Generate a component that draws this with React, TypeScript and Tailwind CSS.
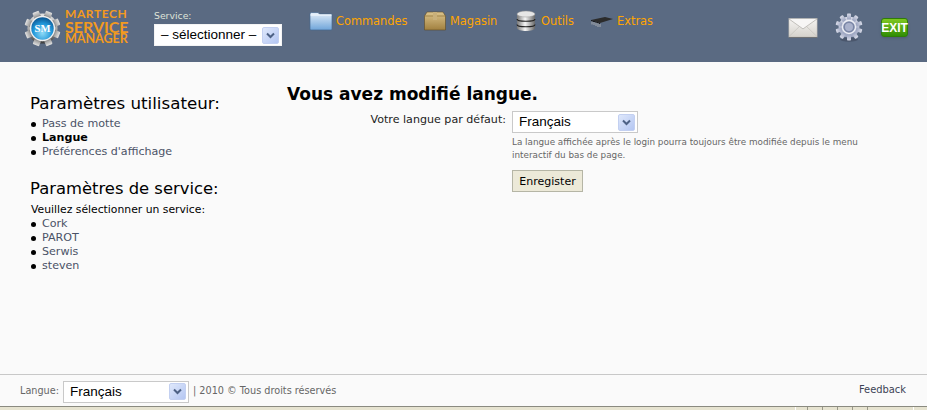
import React from "react";

const Arrow = () => (
  <span className="flex h-[17px] w-[17px] items-center justify-center rounded-[2px] bg-gradient-to-br from-[#dfe8fb] to-[#b4c6f2] border border-[#c3d0f1]">
    <svg width="9" height="7" viewBox="0 0 9 7">
      <path d="M1 1.5 L4.5 5 L8 1.5" fill="none" stroke="#4d6185" strokeWidth="2" />
    </svg>
  </span>
);

const Select = ({ label, w, border = "border-[#c9c9c9]" }: { label: string; w: string; border?: string }) => (
  <div className={`flex h-[22px] items-center justify-between border bg-white pl-[6px] pr-[2px] font-['Liberation_Sans',sans-serif] text-[13.5px] leading-none text-black ${w} ${border}`}>
    <span>{label}</span>
    <Arrow />
  </div>
);

const Logo = () => (
  <svg width="37" height="37" viewBox="0 0 38 38">
    <defs>
      <linearGradient id="g1" x1="0" y1="0" x2="0" y2="1">
        <stop offset="0" stopColor="#e2e2e2" />
        <stop offset="0.55" stopColor="#a5a5a5" />
        <stop offset="1" stopColor="#3a3a3a" />
      </linearGradient>
      <radialGradient id="g2" cx="0.5" cy="0.7" r="0.65">
        <stop offset="0" stopColor="#8fdcf8" />
        <stop offset="0.65" stopColor="#1f95d8" />
        <stop offset="1" stopColor="#0e5f9c" />
      </radialGradient>
    </defs>
    <g fill="url(#g1)">
      <circle cx="19" cy="19" r="15.5" />
      {[0, 45, 90, 135, 180, 225, 270, 315].map((a) => (
        <rect key={a} x="15.5" y="0.5" width="7" height="8" rx="1" transform={`rotate(${a + 22} 19 19)`} />
      ))}
    </g>
    <circle cx="19" cy="19" r="13" fill="#f0f0f0" />
    <circle cx="19" cy="19" r="11.5" fill="url(#g2)" />
    <text x="19" y="23" textAnchor="middle" fontFamily="'Liberation Serif', serif" fontSize="11" fontWeight="700" fill="#fff">SM</text>
  </svg>
);

const Folder = () => (
  <svg width="24" height="20" viewBox="0 0 24 20">
    <defs>
      <linearGradient id="f1" x1="0" y1="0" x2="0" y2="1">
        <stop offset="0" stopColor="#e4eef8" />
        <stop offset="1" stopColor="#6fa5da" />
      </linearGradient>
    </defs>
    <path d="M1 3 Q1 1.5 2.5 1.5 H9 L10.5 3 H22 Q23 3 23 4 V18 Q23 19 22 19 H2 Q1 19 1 18 Z" fill="url(#f1)" stroke="#46688f" strokeWidth="0.7" />
    <path d="M1.5 4 H22.5" stroke="#f7fbff" />
  </svg>
);

const Box = () => (
  <svg width="22" height="20" viewBox="0 0 22 20">
    <defs>
      <linearGradient id="b1" x1="0" y1="0" x2="0" y2="1">
        <stop offset="0" stopColor="#dcc48c" />
        <stop offset="1" stopColor="#a1803f" />
      </linearGradient>
    </defs>
    <path d="M3 1 H19 L21.5 5 V19 H0.5 V5 Z" fill="url(#b1)" stroke="#5e4a26" strokeWidth="0.6" />
    <path d="M0.5 5 H21.5" stroke="#8d7038" strokeWidth="0.7" />
    <rect x="9" y="1" width="4" height="8" fill="#c9b07a" />
  </svg>
);

const Db = () => (
  <svg width="20" height="22" viewBox="0 0 20 22">
    <defs>
      <linearGradient id="d1" x1="0" y1="0" x2="1" y2="0">
        <stop offset="0" stopColor="#777" />
        <stop offset="0.45" stopColor="#f6f6f6" />
        <stop offset="1" stopColor="#666" />
      </linearGradient>
    </defs>
    <path d="M1 4 V18 C1 22 19 22 19 18 V4 Z" fill="url(#d1)" />
    <ellipse cx="10" cy="4" rx="9" ry="3" fill="#e6e6e6" stroke="#999" strokeWidth="0.5" />
    <path d="M1 9 C1 12 19 12 19 9 M1 14.5 C1 17.5 19 17.5 19 14.5" fill="none" stroke="#222" strokeWidth="1.2" />
  </svg>
);

const Chip = () => (
  <svg width="24" height="14" viewBox="0 0 24 14">
    <path d="M1 6 L15 3 L23 5 L10 9 Z" fill="#2b2b2b" />
    <path d="M1 6 L10 9 V10 L1 7 Z" fill="#111" />
    <path d="M2 7.5 V10.5 M4 8 V11 M6 8.5 V12 M8 9 V13 M10 10 V13" stroke="#bbb" strokeWidth="0.8" />
  </svg>
);

const Mail = () => (
  <svg width="30" height="20" viewBox="0 0 32 22">
    <defs>
      <linearGradient id="m1" x1="0" y1="0" x2="0" y2="1">
        <stop offset="0" stopColor="#f5f4f2" />
        <stop offset="1" stopColor="#d5d2cc" />
      </linearGradient>
    </defs>
    <rect x="0.5" y="0.5" width="31" height="20.5" fill="url(#m1)" stroke="#b5b2ac" strokeWidth="0.6" />
    <path d="M0.5 1 L16 12 L31.5 1" fill="#f7f6f5" stroke="#a5a29c" strokeWidth="0.7" />
    <path d="M0.5 20.5 L12 9.5 M31.5 20.5 L20 9.5" stroke="#c2bfb9" strokeWidth="0.7" />
    <path d="M0.5 21.5 H31.5" stroke="#6f6f6f" />
  </svg>
);

const Gear = () => (
  <svg width="28" height="29" viewBox="0 0 28 29">
    <defs>
      <linearGradient id="g3" x1="0" y1="0" x2="0" y2="1">
        <stop offset="0" stopColor="#d8dbe8" />
        <stop offset="1" stopColor="#9aa3bf" />
      </linearGradient>
    </defs>
    <ellipse cx="14" cy="26.5" rx="9" ry="2.2" fill="#3f4a5e" opacity="0.6" />
    <g fill="url(#g3)">
      <circle cx="14" cy="14" r="10.5" />
      {[0, 36, 72, 108, 144, 180, 216, 252, 288, 324].map((a) => (
        <rect key={a} x="12" y="0.5" width="4" height="6" rx="0.8" transform={`rotate(${a} 14 14)`} />
      ))}
    </g>
    <circle cx="14" cy="14" r="6.5" fill="#7a86a6" stroke="#eceef5" strokeWidth="1.4" />
    <circle cx="14" cy="14" r="4" fill="#aab2cc" />
  </svg>
);

const Nav = ({ icon, label, w, iw }: { icon: React.ReactNode; label: string; w: string; iw: string }) => (
  <div className={`flex items-center ${w}`}>
    <span className={`flex shrink-0 justify-start ${iw}`}>{icon}</span>
    <span className="mt-[2px] text-[11.4px] leading-none text-[#ffa500]">{label}</span>
  </div>
);

const Item = ({ children, bold }: { children: React.ReactNode; bold?: boolean }) => (
  <li className={`flex h-[14px] items-center text-[11.1px] leading-[14px] ${bold ? "font-bold text-black" : "text-[#4a5266]"}`}>
    <span className="mr-[6px] ml-[1px] inline-block h-[5px] w-[5px] rounded-full bg-black" />
    <span>{children}</span>
  </li>
);

export default function App() {
  return (
    <div className="flex h-[410px] w-[927px] flex-col overflow-hidden bg-[#fafafa] font-['DejaVu_Sans',sans-serif]">
      <header className="flex h-[62px] shrink-0 items-start bg-[#5a6a82]">
        <div className="ml-[24px] mt-[8px] flex w-[106px] shrink-0 items-center">
          <Logo />
          <div className="mb-[4px] ml-[4px] flex flex-col items-start font-['Lato',sans-serif] font-bold uppercase leading-none text-[#f39a1e]">
            <span className="text-[12px] tracking-[0.6px] leading-[12px]">Martech</span>
            <span className="text-[16px] leading-[13px]">Service</span>
            <span className="text-[12.5px] leading-[11px]">Manager</span>
          </div>
        </div>
        <div className="ml-[24px] mt-[10px] flex flex-col">
          <span className="text-[9.3px] leading-[12px] text-[#dfe3d8]">Service:</span>
          <div className="mt-[2px]">
            <Select label="– sélectionner –" w="w-[128px]" border="border-[#f4f4f4]" />
          </div>
        </div>
        <nav className="ml-[27px] mt-[10px] flex">
          <Nav icon={<Folder />} label="Commandes" w="w-[115px]" iw="w-[27px]" />
          <Nav icon={<Box />} label="Magasin" w="w-[92px]" iw="w-[26px]" />
          <Nav icon={<Db />} label="Outils" w="w-[74px]" iw="w-[25px]" />
          <Nav icon={<Chip />} label="Extras" w="w-[63px]" iw="w-[27px]" />
        </nav>
        <div className="ml-auto mr-[19px] mt-[13px] flex items-start">
          <div className="mt-[5px]"><Mail /></div>
          <div className="ml-[17px]"><Gear /></div>
          <div className="ml-[18px] mt-[5px] flex h-[19px] w-[27px] items-center justify-center rounded-[3px] border border-[#2f7d08] bg-gradient-to-b from-[#7fc81f] to-[#2f8e05] font-['Liberation_Sans',sans-serif] text-[12px] font-bold leading-none text-white shadow-sm">
            EXIT
          </div>
        </div>
      </header>

      <main className="flex flex-1 items-start">
        <aside className="ml-[30px] mt-[32px] w-[257px] shrink-0">
          <h2 className="text-[16.7px] font-normal leading-[19px] text-black">Paramètres utilisateur:</h2>
          <ul className="mt-[4px]">
            <Item>Pass de motte</Item>
            <Item bold>Langue</Item>
            <Item>Préférences d'affichage</Item>
          </ul>
          <h2 className="mt-[20px] text-[16.4px] font-normal leading-[19px] text-black">Paramètres de service:</h2>
          <p className="mt-[5px] ml-[1px] text-[10.8px] leading-[14px] text-black">Veuillez sélectionner un service:</p>
          <ul>
            <Item>Cork</Item>
            <Item>PAROT</Item>
            <Item>Serwis</Item>
            <Item>steven</Item>
          </ul>
        </aside>
        <section className="mt-[20px] flex-1">
          <h1 className="text-[17px] font-bold leading-[24px] text-black">Vous avez modifié langue.</h1>
          <div className="mt-[5px] flex">
            <div className="w-[225px] shrink-0 pr-[6px] pt-[2px] text-right text-[11.1px] leading-[14px] text-[#222]">Votre langue par défaut:</div>
            <div className="flex w-[355px] flex-col items-start">
              <Select label="Français" w="w-[126px]" />
              <p className="mt-[3px] text-[8.8px] leading-[13px] text-[#666]">
                La langue affichée après le login pourra toujours être modifiée depuis le menu interactif du bas de page.
              </p>
              <button className="mt-[8px] h-[22px] w-[71px] border border-[#b5b5a5] bg-[#ece9d8] text-[11px] leading-none text-black">Enregister</button>
            </div>
          </div>
        </section>
      </main>

      <footer className="flex h-[32px] shrink-0 items-center border-t border-[#c8c8c8] bg-[#fafafa] pl-[20px] pr-[21px] text-[9.7px] text-[#666]">
        <span className="mt-[1px]">Langue:</span>
        <div className="ml-[4px] mr-[4px] mt-[2px]"><Select label="Français" w="w-[126px]" /></div>
        <span className="mt-[1px]">| 2010 © Tous droits réservés</span>
        <span className="ml-auto text-[9.9px] text-[#3c4356]">Feedback</span>
      </footer>
      <div className="flex h-[4px] shrink-0 border-t border-[#8a8a80] bg-[#e6e3d0]">
        <div className="ml-[795px] h-full w-px bg-white" />
        <div className="ml-[11px] h-full w-px bg-[#9a9888]" />
        <div className="ml-[14px] h-full w-px bg-[#9a9888]" />
        <div className="ml-[14px] h-full w-px bg-[#9a9888]" />
        <div className="ml-[14px] h-full w-px bg-[#9a9888]" />
        <div className="ml-[14px] h-full w-px bg-[#9a9888]" />
        <div className="ml-[45px] h-full w-px bg-white" />
      </div>
    </div>
  );
}
